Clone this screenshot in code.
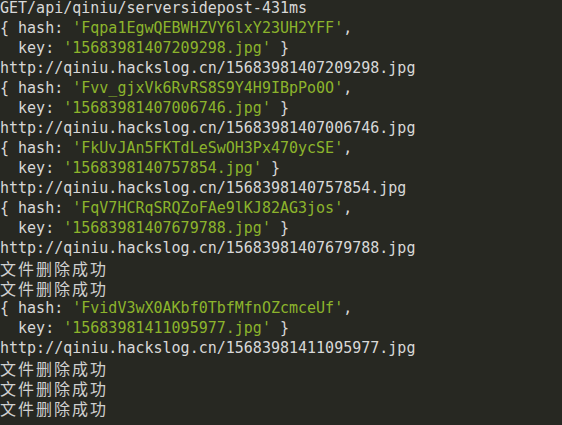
const entries = [
  { hash: "Fqpa1EgwQEBWHZVY6lxY23UH2YFF", key: "15683981407209298.jpg" },
  { hash: "Fvv_gjxVk6RvRS8S9Y4H9IBpPo0O", key: "15683981407006746.jpg" },
  { hash: "FkUvJAn5FKTdLeSwOH3Px470ycSE", key: "1568398140757854.jpg" },
  { hash: "FqV7HCRqSRQZoFAe9lKJ82AG3jos", key: "15683981407679788.jpg" },
];

const last = { hash: "FvidV3wX0AKbf0TbfMfnOZcmceUf", key: "15683981411095977.jpg" };

function Entry({ hash, fileKey }: { hash: string; fileKey: string }) {
  return (
    <>
      <div className="h-[20px]">
        {"{ hash: "}
        <span className="text-[#8cb42c]">'{hash}'</span>,
      </div>
      <div className="h-[20px]">
        {"  key: "}
        <span className="text-[#8cb42c]">'{fileKey}'</span> {"}"}
      </div>
      <div className="h-[20px]">http://qiniu.hackslog.cn/{fileKey}</div>
    </>
  );
}

function Deleted() {
  return (
    <div className="h-[20px] font-['Noto_Sans_CJK_SC',sans-serif] text-[16px] leading-[20px] tracking-[2px] text-[#d0d0d0]">
      文件删除成功
    </div>
  );
}

export default function App() {
  return (
    <main className="h-[425px] w-[562px] overflow-hidden bg-[#272822] text-[#d8d8d8]">
      <div className="-mt-[2px] whitespace-pre font-['DejaVu_Sans_Mono','Liberation_Mono',monospace] text-[15px] leading-[20px]">
        <div className="h-[20px]">GET/api/qiniu/serversidepost-431ms</div>
        {entries.map((e) => (
          <Entry key={e.key} hash={e.hash} fileKey={e.key} />
        ))}
        <Deleted />
        <Deleted />
        <Entry hash={last.hash} fileKey={last.key} />
        <Deleted />
        <Deleted />
        <Deleted />
      </div>
    </main>
  );
}
